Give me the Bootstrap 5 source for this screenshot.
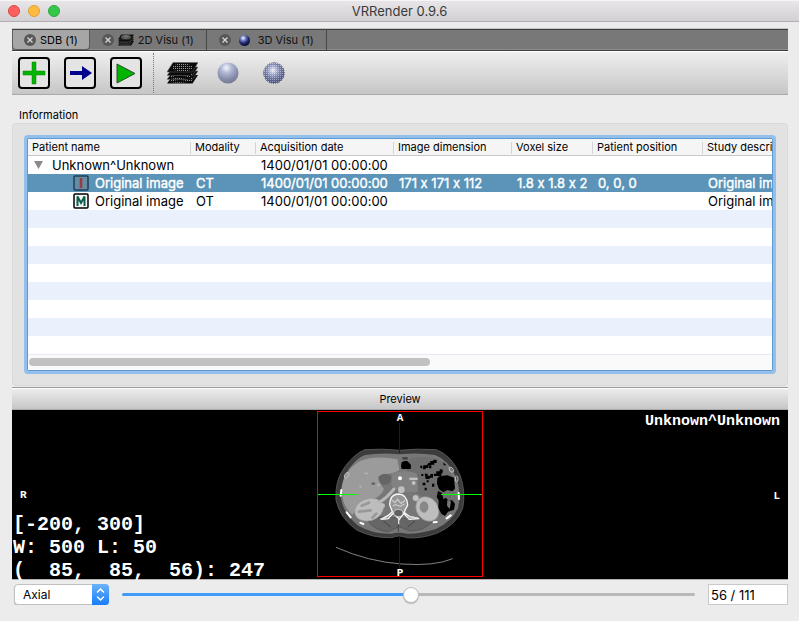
<!DOCTYPE html>
<html lang="en">
<head>
<meta charset="utf-8">
<meta name="viewport" content="width=device-width, initial-scale=1">
<title>VRRender 0.9.6</title>
<link href="https://cdn.jsdelivr.net/npm/bootstrap@5.3.0/dist/css/bootstrap.min.css" rel="stylesheet">
<style>
body{font-family:Inter,"Liberation Sans",sans-serif;font-size:13px;line-height:18px;color:#000;background:#ececec;font-feature-settings:"calt" 0}
button{font:inherit;color:inherit}
.title-bar{height:22px;background:linear-gradient(#e9e7e9,#d2d0d2);border-bottom:1px solid #b1afb1;box-shadow:inset 0 1px #f6f5f6;padding:0 8px;display:grid;grid-template-columns:1fr auto 1fr}
.title-bar h1{font-size:13px;line-height:22px;color:#3a3a3a;font-weight:400}
.light{width:12px;height:12px;border-radius:50%;border:1px solid;padding:0}
.light-close{background:#fc615d;border-color:#e0443e}
.light-min{background:#fdbc40;border-color:#dea035}
.light-max{background:#34c84a;border-color:#27aa35}
.window-body{padding:7px 11px 0 12px}
.tab-strip{height:22px;background:#787878;border-top:1px solid #3c403c;border-bottom:1px solid #3c403c;box-shadow:0 -1px #c4c4c4,inset 0 -1px #8e8e8e}
.view-tab{border-right:1px solid #474747;padding:0 12px;font-size:11px;color:#111}
.view-tab.current{background:#a6a6a6;border:1px solid #5c5c5c;border-top:0;border-radius:0 0 4px 4px;padding:0 11px;color:#000}
.view-tab button{background:none;border:0;padding:0}
.view-tab svg{display:block}
.tool-bar{height:44px;background:linear-gradient(#efefef,#c6c6c6);border-top:1px solid #fff;border-bottom:1px solid #aaa;padding:0 5px}
.tools{display:flex;gap:12px;padding:0 10px 0 0}
.tools+.tool-split+.tools{padding:0 0 0 11px}
.tool{background:none;border:0;padding:0;width:34px;height:34px}
.tool svg{display:block}
.tool-split{border-left:1px dotted #777;height:40px}
.group-title{font-size:11px;line-height:16px;padding:12px 7px 0}
.group-panel{background:#e2e2e2;border:1px solid #d9d9d9;border-radius:4px;padding:14px;margin-bottom:1px}
.tree{border:1px solid #5e99d0;outline:3px solid #92bfec;border-radius:1px;background:#fff;overflow:hidden;min-width:0}
.tree-view{overflow:hidden;height:215px;background:linear-gradient(#fff 50%,#eaf1fd 50%) 0 17px/100% 36px}
.tree table{table-layout:fixed;width:1376px;border-collapse:separate;border-spacing:0}
.tree th{height:17px;font-size:11px;line-height:15px;font-weight:400;background:#f5f5f5;border-bottom:1px solid #c8c8c8;padding:0 4px;white-space:nowrap;background-image:linear-gradient(#d4d4d4,#d4d4d4);background-size:1px 12px;background-position:right 3px;background-repeat:no-repeat}
.tree td{height:18px;line-height:18px;padding:0 5px;white-space:nowrap}
.tree tr.picked td{background:#5b94b8;color:#fff;-webkit-text-stroke:.4px #fff}
.tree td svg{display:block}
.leaf{gap:6px;padding-left:40px}
.scroll-track{height:16px;background:#fafafa;border-top:1px solid #e5eaf5;padding:3px 1px}
.scroll-thumb{height:8px;width:54%;border-radius:4px;background:#c1c1c1}
.dock-title{font-size:11px;line-height:22px;height:23px;background:linear-gradient(#eee,#c6c6c6);border-top:1px solid #999;border-bottom:1px solid #aaa;box-shadow:inset 0 1px #fff}
.scene{background:#000;color:#fff;font-family:"Liberation Mono",monospace;font-weight:700;border-bottom:1px solid #b5b0b0;height:170px}
.scene svg{display:block;margin-top:1px}
.mark-side{font-size:11px;line-height:12px}
.readout{font-size:20px;line-height:23px;white-space:pre;margin:0 0 -3px;padding-left:1px;font-family:inherit;overflow:visible}
.patient{font-size:15px;line-height:24px}
.plane{width:95px;height:21px;border:1px solid #c0c0c0;border-radius:4px;padding:0 8px;appearance:none;font-size:12px;color:#000;background:#fff;box-shadow:0 1px 1px #bbb}
.plane-box{display:grid;margin:0 13px 0 2px}
.plane-box>*{grid-area:1/1}
.plane-arrows{justify-self:end;pointer-events:none}
.slice{appearance:none;height:18px;margin:0 13px 0 0;background:none;min-width:0}
.slice::-webkit-slider-runnable-track{height:3px;border-radius:2px;background:linear-gradient(90deg,#419bf9 50%,#b8b8b8 50%)}
.slice::-webkit-slider-thumb{appearance:none;width:16px;height:16px;border-radius:50%;background:#fff;border:1px solid #bdbdbd;margin-top:-6px;box-shadow:0 1px 1px #bbb}
.slice-no{width:80px;height:21px;border:1px solid #c9c9c9;padding:0 2px;font-size:13px;background:#fff;color:#000}
</style>
<script src="https://cdn.jsdelivr.net/npm/bootstrap@5.3.0/dist/js/bootstrap.bundle.min.js"></script>
</head>
<body>
<svg width="0" height="0" class="position-absolute" aria-hidden="true">
<defs>
<radialGradient id="ballPale" cx=".42" cy=".25" r=".8"><stop offset="0" stop-color="#f4f6fd"/><stop offset=".3" stop-color="#b4bbd6"/><stop offset=".7" stop-color="#858caa"/><stop offset="1" stop-color="#73758a"/></radialGradient>
<radialGradient id="ballDark" cx=".38" cy=".28" r=".75"><stop offset="0" stop-color="#fff"/><stop offset=".3" stop-color="#7481c4"/><stop offset=".65" stop-color="#1c2668"/><stop offset="1" stop-color="#0a0d30"/></radialGradient>
<radialGradient id="ballGrid" cx=".45" cy=".35" r=".62"><stop offset="0" stop-color="#f6f8ff"/><stop offset=".5" stop-color="#b3bcdc"/><stop offset="1" stop-color="#8d94b4"/></radialGradient>
<pattern id="weave" width="2" height="2" patternUnits="userSpaceOnUse"><rect width="2" height="2" fill="#111"/><rect width="1" height="1" fill="#999"/></pattern>
<pattern id="mesh" width="2" height="2" patternUnits="userSpaceOnUse"><path d="M0 0h2v1H1v1H0z" fill="#20285a" fill-opacity=".65"/></pattern>
<radialGradient id="meshFade" cx=".45" cy=".4" r=".6"><stop offset=".1" stop-color="#222"/><stop offset=".7" stop-color="#bbb"/><stop offset="1" stop-color="#fff"/></radialGradient>
<mask id="meshMask"><circle cx="17" cy="17" r="11" fill="url(#meshFade)"/></mask>
<symbol id="closer" viewBox="0 0 12 12"><circle cx="6" cy="6" r="6" fill="#575757"/><path d="M3.500 3.500l5 5m0-5l-5 5" stroke="#d5d5d5" stroke-width="1.300"/></symbol>
<symbol id="slices" viewBox="0 0 31 22">
<g fill="#0a0a0a"><path d="M6 13h25l-5.500 8.500H0z"/><path d="M6 9h25l-5.500 8.500H0z" stroke="#777" stroke-width=".5"/><path d="M6 5h25l-5.500 8.500H0z" stroke="#777" stroke-width=".5"/><path d="M6 .5h25l-5.500 9.500H0z" stroke="#666" stroke-width=".5"/></g>
<ellipse cx="15.500" cy="5.500" rx="10" ry="4" fill="url(#weave)"/><path d="M3 13q12 6 23-2l-1 3q-11 5-22 2zM3 17q12 5 23-2l-1 4q-11 3-22 1z" fill="url(#weave)"/></symbol>
</defs>
</svg>

<header class="title-bar align-items-center">
  <div class="d-flex gap-2 align-items-center">
    <button class="light light-close" aria-label="Close"></button><button class="light light-min" aria-label="Minimise"></button><button class="light light-max" aria-label="Zoom"></button>
  </div>
  <h1 class="m-0">VRRender 0.9.6</h1>
</header>

<main class="window-body d-flex flex-column">
  <nav class="tab-strip d-flex">
    <div class="view-tab current d-flex align-items-center gap-1"><button aria-label="Close SDB"><svg width="12" height="12"><use href="#closer"/></svg></button><button>SDB (1)</button></div>
    <div class="view-tab d-flex align-items-center gap-1"><button aria-label="Close 2D Visu"><svg width="12" height="12"><use href="#closer"/></svg></button><button class="d-flex align-items-center gap-1"><svg width="16" height="12"><use href="#slices"/></svg>2D Visu (1)</button></div>
    <div class="view-tab d-flex align-items-center gap-2"><button aria-label="Close 3D Visu"><svg width="12" height="12"><use href="#closer"/></svg></button><button class="d-flex align-items-center gap-2"><svg width="11" height="11"><circle cx="5.500" cy="5.500" r="5.500" fill="url(#ballDark)"/></svg>3D Visu (1)</button></div>
  </nav>

  <div class="tool-bar d-flex align-items-center">
    <div class="tools">
      <button class="tool" aria-label="Add"><svg width="34" height="34"><rect x="2" y="2" width="30" height="30" rx="3" fill="#e4e4e4" stroke="#000" stroke-width="2"/><path d="M15 6h4v9h9v4h-9v9h-4v-9H6v-4h9z" fill="#00b400" stroke="#088008" stroke-width=".5"/></svg></button>
      <button class="tool" aria-label="Import"><svg width="34" height="34"><rect x="2" y="2" width="30" height="30" rx="3" fill="#e4e4e4" stroke="#000" stroke-width="2"/><path d="M7 15h12V10l10 7-10 7v-5H7z" fill="#00008c"/></svg></button>
      <button class="tool" aria-label="Run"><svg width="34" height="34"><rect x="2" y="2" width="30" height="30" rx="3" fill="#e4e4e4" stroke="#000" stroke-width="2"/><path d="M8 8l18 9.500L8 27z" fill="#00b400" stroke="#2b502b" stroke-width="1"/></svg></button>
    </div>
    <div class="tool-split"></div>
    <div class="tools">
      <button class="tool" aria-label="2D view"><svg width="34" height="34"><use href="#slices" x="2" y="6" width="31" height="22"/></svg></button>
      <button class="tool" aria-label="3D view"><svg width="34" height="34"><circle cx="17" cy="17" r="10.500" fill="url(#ballPale)"/></svg></button>
      <button class="tool" aria-label="Voxel view"><svg width="34" height="34"><circle cx="17" cy="17" r="10" fill="url(#ballGrid)"/><circle cx="17" cy="17" r="11" fill="url(#mesh)" mask="url(#meshMask)"/></svg></button>
    </div>
  </div>

  <h2 class="group-title fw-normal m-0">Information</h2>
  <section class="group-panel">
    <div class="tree">
      <div class="tree-view">
        <table>
          <colgroup><col style="width:163px"><col style="width:65px"><col style="width:138px"><col style="width:118px"><col style="width:81px"><col style="width:110px"><col></colgroup>
          <thead><tr><th>Patient name</th><th>Modality</th><th>Acquisition date</th><th>Image dimension</th><th>Voxel size</th><th>Patient position</th><th>Study description</th></tr></thead>
          <tbody>
            <tr><td><div class="d-flex align-items-center gap-2"><svg width="11" height="8"><path d="M1 0h9L5.500 8z" fill="#8a8a8a"/></svg>Unknown^Unknown</div></td><td></td><td>1400/01/01 00:00:00</td><td></td><td></td><td></td><td></td></tr>
            <tr class="picked"><td><div class="leaf d-flex align-items-center"><svg width="16" height="16"><rect x="1" y="1" width="14" height="14" rx="1" fill="#668ba2" stroke="#1f3f54" stroke-width="1.500"/><path d="M8 3v10" stroke="#9c3a42" stroke-width="2.500"/></svg>Original image</div></td><td>CT</td><td>1400/01/01 00:00:00</td><td>171 x 171 x 112</td><td>1.8 x 1.8 x 2</td><td>0, 0, 0</td><td>Original image</td></tr>
            <tr><td><div class="leaf d-flex align-items-center"><svg width="16" height="16"><rect x="1" y="1" width="14" height="14" rx="1" fill="#f3f6f5" stroke="#000" stroke-width="1.500"/><path d="M4.500 13V3.500L8 10l3.500-6.500V13" fill="none" stroke="#0d5c4c" stroke-width="2"/></svg>Original image</div></td><td>OT</td><td>1400/01/01 00:00:00</td><td></td><td></td><td></td><td>Original image</td></tr>
          </tbody>
        </table>
      </div>
      <div class="scroll-track"><div class="scroll-thumb"></div></div>
    </div>
  </section>

  <section>
    <h2 class="dock-title text-center fw-normal m-0">Preview</h2>
    <div class="scene d-flex">
      <div class="col d-flex flex-column justify-content-end">
        <div class="mark-side ps-2 mb-2 pb-1">R</div>
        <pre class="readout">[-200, 300]
W: 500 L: 50
(  85,  85,  56): 247</pre>
      </div>
      <svg class="flex-shrink-0" width="166" height="166" viewBox="21 18 498 498" role="img" aria-label="Axial slice">
        <path d="M165 134Q215 130 268 136Q320 130 378 134Q425 150 450 210Q468 260 458 310Q440 360 380 385Q330 402 290 398Q268 388 245 398Q190 400 140 375Q90 340 78 285Q74 225 105 185Q135 145 165 134z" fill="#3c3c3c" stroke="#555" stroke-width="3"/>
        <path d="M165 150Q215 142 268 148Q325 142 375 150Q415 165 438 215Q455 265 444 310Q425 350 378 372Q325 388 290 386Q268 380 245 386Q190 388 145 362Q103 330 94 285Q88 230 118 190Q142 158 165 150z" fill="#777"/>
        <path d="M150 168Q200 150 262 163L268 195Q255 205 220 208Q205 235 222 252Q215 275 180 285Q140 300 128 330Q92 300 96 245Q104 195 150 168z" fill="#9b9b9b"/>
        <path d="M205 215Q225 198 245 215Q245 240 220 240Q205 235 205 215z" fill="#656565"/>
        <path d="M300 160Q365 145 410 180Q438 225 436 285Q420 325 388 338L380 290L340 276L300 252Q280 205 300 160z" fill="#6e6e6e"/>
        <path d="M245 205Q285 192 320 205L325 260L285 262L245 245z" fill="#828282"/>
        <path d="M172 345L215 335L268 340L325 337L372 345Q340 380 300 378L268 365L235 380Q195 378 172 345z" fill="#666" stroke="#4b4b4b" stroke-width="2"/>
        <path d="M265 350V380M220 348l22 18M315 348l-22 18" stroke="#444" stroke-width="3"/>
        <g fill="#bdbdbd" stroke="#999" stroke-width="2">
          <ellipse cx="177" cy="314" rx="44" ry="33" transform="rotate(-18 177 314)"/>
          <ellipse cx="352" cy="312" rx="32" ry="39" transform="rotate(-35 352 312)"/>
        </g>
        <path d="M155 302l22-9m-30 27l35-4m5 22l12-12" stroke="#999" stroke-width="8" stroke-linecap="round"/>
        <ellipse cx="342" cy="306" rx="13" ry="17" fill="#888"/>
        <path d="M206 293Q230 280 252 252" fill="none" stroke="#b8b8b8" stroke-width="9" stroke-linecap="round"/>
        <g fill="#c0c0c0"><circle cx="274" cy="254" r="10"/><circle cx="317" cy="279" r="9"/><circle cx="218" cy="302" r="7"/><circle cx="311" cy="234" r="6"/><path d="M298 218h25v7h-25z"/></g>
        <g fill="#b4b4b4"><ellipse cx="190" cy="236" rx="6" ry="4" fill="#666"/><circle cx="205" cy="240" r="4"/><path d="M163 202l13 2-2 4-10-2zM150 240l5 8-4 1-4-7z"/></g>
        <circle cx="270" cy="220" r="6" fill="#fff"/>
        <path d="M239 300Q240 267 265 267Q291 268 293 300L282 322L300 335L328 341L298 343L281 325L268 343L250 324L235 341L212 343L235 331L247 320z" fill="#969696" stroke="#f4f4f4" stroke-width="4"/>
        <path d="M245 285l10 8 8-10 10 12 12-8M248 303l9-4 14 5 13-7" stroke="#c9c9c9" stroke-width="4" fill="none"/>
        <ellipse cx="265" cy="324" rx="14" ry="11" fill="#606060" stroke="#eee" stroke-width="2"/>
        <path d="M266 340v18M212 343l20-3M305 336l22 4" stroke="#ddd" stroke-width="4"/>
        <path d="M275 172l8-4h9l11 12-1 12h-27l-2-9z" fill="#000"/><path d="M277 156h16v8h-16z" fill="#444"/>
        <g fill="#000">
          <path d="M388 214l24-3 20 7 3 33-8 8-15-4-12 7-13-9-6-17 1-16z"/>
          <path d="M384 258l12 6 4 18 8-4 8 10 10-2 9 10-3 18-18 6-9 13-11-7-9-17 1-22-6-12z"/>
          <path d="M330 182h7v8h-5zM340 181h10l6-8h8v9h-9v7h-8v4h-8zM360 168h8l4-4h8v10h-7v5h-9zM371 206h8v-7h10v-6h8l2 8-5 6v6h-22zM344 206h9v6h8v-5h8v11h-10v4h-12zM357 183h7v7h-7zM334 207h6v6h-6zM338 233h8v8h-8zM350 226h6v6h-6zM366 236h7v9h-7zM344 248h6v8h-6zM400 172l9 9h-8z"/>
        </g>
        <path d="M412 285l11 5-4 22-8-10zM428 266l6 18-11-5z" fill="#777"/>
        <g stroke="#fff" stroke-width="6" stroke-linecap="round" fill="none"><path d="M94 255l-2 17M110 322l12 15M151 353l9 4M371 352l9-1M410 340l12-9M446 264l1 18"/></g>
        <g stroke="#bbb" stroke-width="3" fill="none"><ellipse cx="110" cy="211" rx="5" ry="9" transform="rotate(35 110 211)"/><ellipse cx="424" cy="194" rx="5" ry="8" transform="rotate(-35 424 194)"/><ellipse cx="440" cy="222" rx="4" ry="9"/></g>
        <path d="M78 427Q175 470 275 477T428 461" fill="none" stroke="#9a9a9a" stroke-width="2.500"/>
        <path d="M267 54h3v89h-3zM267 393h3v100h-3z" fill="#00f"/>
        <path d="M24 267h120v3H24zM393 267h123v3H393z" fill="#0f0"/>
        <rect x="22.500" y="19.500" width="495" height="495" fill="none" stroke="red" stroke-width="3"/>
        <g fill="#fff" font-size="33" text-anchor="middle"><text x="270" y="48">A</text><text x="270" y="514">P</text></g>
      </svg>
      <div class="col d-flex flex-column align-items-end">
        <div class="patient pe-2">Unknown^Unknown</div>
        <div class="mark-side pe-2 mt-5 pt-2">L</div>
      </div>
    </div>
    <div class="d-flex align-items-center pt-1">
      <div class="plane-box align-items-center">
        <select class="plane" aria-label="Plane"><option>Axial</option><option>Frontal</option><option>Sagittal</option></select>
        <svg class="plane-arrows" width="17" height="21"><defs><linearGradient id="blueBtn" x2="0" y2="1"><stop stop-color="#6cb3fa"/><stop offset="1" stop-color="#177df9"/></linearGradient></defs><path d="M0 0h13q4 0 4 4v13q0 4-4 4H0z" fill="url(#blueBtn)"/><path d="M5.500 8l3-3 3 3M5.500 13l3 3 3-3" fill="none" stroke="#fff" stroke-width="1.500" stroke-linecap="round"/></svg>
      </div>
      <input type="range" class="slice flex-grow-1" min="0" max="111" value="56" aria-label="Slice">
      <input type="text" class="slice-no" value="56 / 111" aria-label="Slice number">
    </div>
  </section>
</main>
</body>
</html>
